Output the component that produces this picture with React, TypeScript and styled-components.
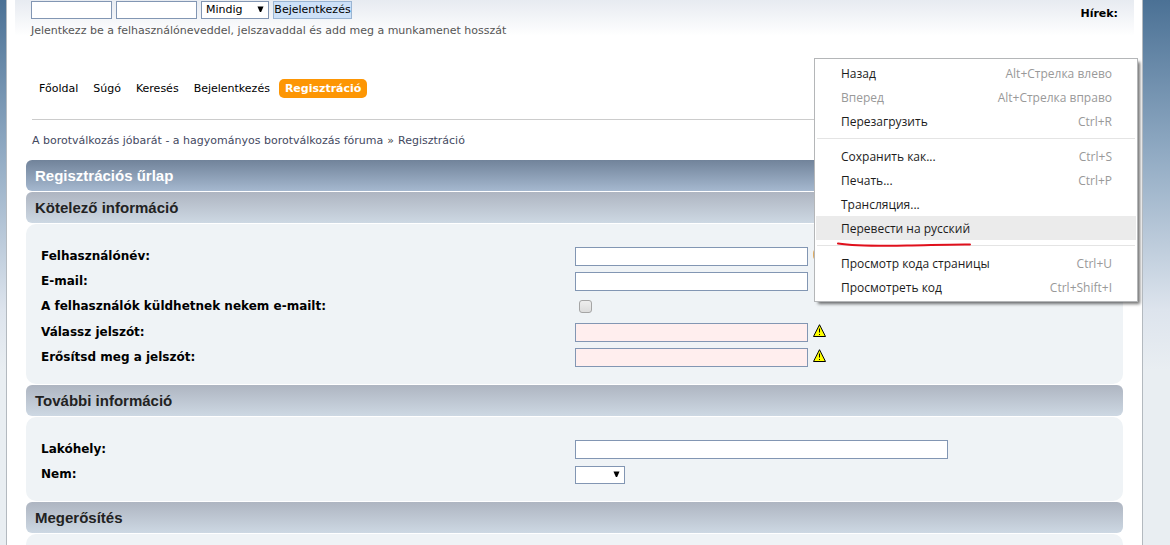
import React from "react";
import styled, { createGlobalStyle } from "styled-components";

const Global = createGlobalStyle`
  * { box-sizing: border-box; }
  body {
    margin: 0;
    background: #e9eef2 linear-gradient(to bottom, #4b7195 0, #8fa9c2 150px, #dde4ed 310px, #e9eef2 370px) no-repeat;
    font-family: "DejaVu Sans", Verdana, sans-serif;
    font-size: 11px;
    line-height: 16px;
    color: #000;
  }
  input, select, button { font: inherit; margin: 0; }
`;

const Frame = styled.div`
  position: relative;
  height: 100vh;
  overflow: hidden;
  margin: 0 27px 0 6px;
  padding: 0 19px;
  display: flex;
  flex-direction: column;
  border: solid #b3b9bf;
  border-width: 0 1px;
  background: #fff;
`;

const Header = styled.header`
  display: flex;
  justify-content: space-between;
  align-items: flex-start;
  height: 76px;
  flex: none;
  margin: 0 -11px;
  padding: 1px 16px 0;
  background: linear-gradient(to bottom, #e7ebf1, #fff 36px);
`;

const LoginForm = styled.form`
  display: flex;
  flex-wrap: wrap;
  gap: 4px;
`;

const Break = styled.span`
  flex-basis: 100%;
  color: #555;
  line-height: 16px;
`;

const TextInput = styled.input<{ $invalid?: boolean }>`
  width: 233px;
  height: 19px;
  padding: 0 4px;
  border: 1px solid #8296b3;
  background: ${(p) => (p.$invalid ? "#ffeeee" : "#fff")};
`;

const LoginInput = styled(TextInput)`
  width: 81px;
  height: 18px;
`;

const SelectBox = styled.span<{ $width: number }>`
  position: relative;
  display: inline-flex;
  width: ${(p) => p.$width}px;
  height: 18px;
  svg {
    position: absolute;
    right: 5px;
    top: 5px;
    pointer-events: none;
  }
`;

const Select = styled.select`
  appearance: none;
  width: 100%;
  padding: 0 4px;
  border: 1px solid #8296b3;
  border-radius: 0;
  background: #fff;
  color: #000;
`;

const LoginButton = styled.button`
  height: 18px;
  width: 79px;
  padding: 0;
  border: 1px solid #9ab5d3;
  background: #cde1f8;
  line-height: 16px;
  white-space: nowrap;
`;

const News = styled.strong`
  padding: 5px 0 0;
`;

const Nav = styled.nav`
  display: flex;
  flex: none;
  align-items: center;
  gap: 3px;
  height: 44px;
  margin: 0 6px;
  padding: 0 1px 18px;
  border-bottom: 1px solid #ccc;
`;

const NavLink = styled.a<{ $active?: boolean }>`
  height: 19px;
  padding: 0 6px;
  line-height: 20px;
  text-decoration: none;
  border-radius: 5px;
  color: ${(p) => (p.$active ? "#fff" : "#000")};
  background: ${(p) => (p.$active ? "#fd9604" : "transparent")};
  font-weight: ${(p) => (p.$active ? "bold" : "normal")};
`;

const Crumbs = styled.nav`
  display: flex;
  flex: none;
  gap: 4px;
  height: 40px;
  padding: 13px 6px 0;
  color: #444;
  a { color: #44495f; text-decoration: none; }
`;

const Bar = styled.h3<{ $main?: boolean }>`
  flex: none;
  height: 31px;
  margin: 0 0 1px;
  padding: 0 9px;
  border-radius: 6px;
  font: bold 15px/32px "Liberation Sans", Arial, sans-serif;
  color: ${(p) => (p.$main ? "#fff" : "#222")};
  background: ${(p) =>
    p.$main
      ? "linear-gradient(to bottom, #71839a, #a5b8cf)"
      : "linear-gradient(to bottom, #aeb5c1, #cdd8e3)"};
`;

const Panel = styled.section`
  flex: none;
  margin-bottom: 1px;
  padding: 19px 15px 15px;
  border-radius: 10px;
  background: #eff3f6;
`;

const Field = styled.div<{ $tall?: boolean }>`
  display: grid;
  grid-template-columns: 1fr 1fr;
  height: ${(p) => (p.$tall ? 26 : 25)}px;
  align-items: center;
  label { font-size: 12px; font-weight: bold; }
`;

const Control = styled.div`
  display: flex;
  align-items: center;
  gap: 5px;
  padding-top: 2px;
  > svg { margin-bottom: 4px; }
`;

const WideInput = styled(TextInput)`
  width: 70%;
`;

const Check = styled.input`
  appearance: none;
  width: 13px;
  height: 13px;
  margin: 0 0 2px 4px;
  border: 1px solid #a5a5a5;
  border-radius: 3px;
  background: linear-gradient(#eee, #dcdcdc);
`;

const Menu = styled.div`
  position: absolute;
  top: 58px;
  right: 4px;
  width: 324px;
  padding: 2px 1px;
  border: 1px solid #b4b6b8;
  background: #fff;
  box-shadow: 3px 3px 3px -1px rgba(0, 0, 0, 0.55);
  font: 12px/22px "Open Sans", "Segoe UI", sans-serif;
`;

const MenuItem = styled.button<{ $hover?: boolean }>`
  display: flex;
  justify-content: space-between;
  width: 100%;
  height: 24px;
  padding: 2px 24px 0 25px;
  border: 0;
  color: #1c1c1c;
  background: ${(p) => (p.$hover ? "#ebebeb" : "transparent")};
  &:disabled { color: #999; }
  kbd { font: inherit; color: #999; }
`;

const Separator = styled.hr`
  height: 1px;
  margin: 5px 1px;
  border: 0;
  background: #e4e4e4;
`;

const Underline = styled.svg`
  position: absolute;
  left: 22px;
  top: 182px;
`;

const Arrow = () => (
  <svg width="7" height="7" viewBox="0 0 7 7" aria-hidden="true">
    <path d="M0.5 0.5h6L4.1 6h-1.2z" />
  </svg>
);

const Warning = () => (
  <svg width="13" height="13" viewBox="0 0 13 13" aria-hidden="true">
    <path d="M6.5 0.7L12.5 12.5H0.5z" fill="#ff0" stroke="#000" strokeLinejoin="round" />
    <path d="M6.5 4.5v4M6.5 10v1" stroke="#000" />
  </svg>
);

const Notice = () => (
  <svg width="13" height="13" viewBox="0 0 13 13" aria-hidden="true">
    <rect width="13" height="13" rx="5" fill="#dfab60" />
  </svg>
);

const menuGroups = [
  [
    { text: "Назад", keys: "Alt+Стрелка влево" },
    { text: "Вперед", keys: "Alt+Стрелка вправо", disabled: true },
    { text: "Перезагрузить", keys: "Ctrl+R" },
  ],
  [
    { text: "Сохранить как...", keys: "Ctrl+S" },
    { text: "Печать...", keys: "Ctrl+P" },
    { text: "Трансляция..." },
    { text: "Перевести на русский", hover: true },
  ],
  [
    { text: "Просмотр кода страницы", keys: "Ctrl+U" },
    { text: "Просмотреть код", keys: "Ctrl+Shift+I" },
  ],
] as { text: string; keys?: string; disabled?: boolean; hover?: boolean }[][];

const ContextMenu = () => (
  <Menu role="menu">
    {menuGroups.map((group, i) => (
      <React.Fragment key={i}>
        {i > 0 && <Separator />}
        {group.map((m) => (
          <MenuItem key={m.text} role="menuitem" disabled={m.disabled} $hover={m.hover}>
            <span>{m.text}</span>
            {m.keys && <kbd>{m.keys}</kbd>}
          </MenuItem>
        ))}
      </React.Fragment>
    ))}
    <Underline width="136" height="8" viewBox="0 0 136 8" aria-hidden="true">
      <path d="M1 2.5C18 5 45 5 70 4.6S112 3.4 133 3.6" fill="none" stroke="#e0101c" strokeWidth="2" strokeLinecap="round" />
    </Underline>
  </Menu>
);

export default function App() {
  return (
    <>
      <Global />
      <Frame>
        <Header>
          <LoginForm>
            <LoginInput aria-label="Felhasználónév" />
            <LoginInput type="password" aria-label="Jelszó" />
            <SelectBox $width={68}>
              <Select aria-label="Munkamenet hossza">
                <option>Mindig</option>
              </Select>
              <Arrow />
            </SelectBox>
            <LoginButton type="button">Bejelentkezés</LoginButton>
            <Break>Jelentkezz be a felhasználóneveddel, jelszavaddal és add meg a munkamenet hosszát</Break>
          </LoginForm>
          <News>Hírek:</News>
        </Header>
        <Nav>
          <NavLink href="#home">Főoldal</NavLink>
          <NavLink href="#help">Súgó</NavLink>
          <NavLink href="#search">Keresés</NavLink>
          <NavLink href="#login">Bejelentkezés</NavLink>
          <NavLink href="#register" $active>Regisztráció</NavLink>
        </Nav>
        <Crumbs>
          <a href="#home">A borotválkozás jóbarát - a hagyományos borotválkozás fóruma</a>
          <span>»</span>
          <a href="#register">Regisztráció</a>
        </Crumbs>
        <Bar $main>Regisztrációs űrlap</Bar>
        <Bar>Kötelező információ</Bar>
        <Panel>
          <Field>
            <label htmlFor="user">Felhasználónév:</label>
            <Control><TextInput id="user" /><Notice /></Control>
          </Field>
          <Field>
            <label htmlFor="email">E-mail:</label>
            <Control><TextInput id="email" /></Control>
          </Field>
          <Field $tall>
            <label htmlFor="allow">A felhasználók küldhetnek nekem e-mailt:</label>
            <Control><Check id="allow" type="checkbox" /></Control>
          </Field>
          <Field>
            <label htmlFor="pw1">Válassz jelszót:</label>
            <Control><TextInput id="pw1" type="password" $invalid /><Warning /></Control>
          </Field>
          <Field>
            <label htmlFor="pw2">Erősítsd meg a jelszót:</label>
            <Control><TextInput id="pw2" type="password" $invalid /><Warning /></Control>
          </Field>
        </Panel>
        <Bar>További információ</Bar>
        <Panel>
          <Field>
            <label htmlFor="place">Lakóhely:</label>
            <Control><WideInput id="place" /></Control>
          </Field>
          <Field>
            <label htmlFor="gender">Nem:</label>
            <Control>
              <SelectBox $width={50}>
                <Select id="gender"><option></option></Select>
                <Arrow />
              </SelectBox>
            </Control>
          </Field>
        </Panel>
        <Bar>Megerősítés</Bar>
        <Panel />
        <ContextMenu />
      </Frame>
    </>
  );
}
